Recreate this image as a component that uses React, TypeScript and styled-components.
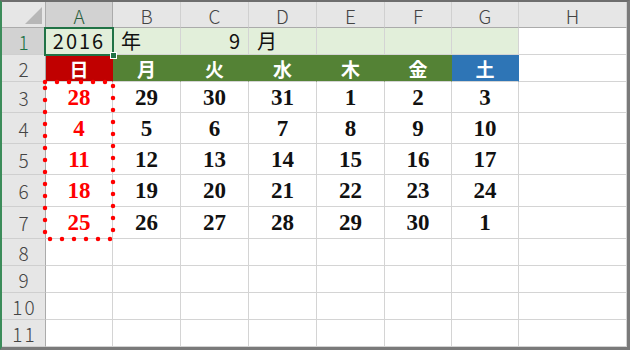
import React from 'react'
import styled, { createGlobalStyle, css } from 'styled-components'

const GlobalStyle = createGlobalStyle`
  html, body {
    margin: 0;
    padding: 0;
    background: #fff;
  }
  * {
    box-sizing: border-box;
  }
`

const gridLine = '#d4d4d4'
const jpFont = `"Noto Sans CJK JP", "Noto Sans", sans-serif`

// same tracks for the cells and for the layer drawn on top of them
const tracks = css`
  display: grid;
  grid-template-columns: 44px 67px 68px 68px 68px 68px 67px 67px 1fr;
  grid-template-rows: 26px 27px 27px 31px 31px 31px 32px 32px 27px 27px 27px 27px;
`

const Frame = styled.div`
  width: 630px;
  height: 350px;
  border-top: 2px solid #6e6e6e;
  border-left: 2px solid #3c8c5a;
  border-right: 3px solid #7a7a7a;
  border-bottom: 3px solid #7a7a7a;
  overflow: hidden;
  background: #fff;
  display: grid;
`

const Sheet = styled.div`
  ${tracks}
  grid-area: 1 / 1;
  font-family: ${jpFont};
`

const Overlay = styled.div`
  ${tracks}
  grid-area: 1 / 1;
  pointer-events: none;
`

const Corner = styled.div`
  background: #e6e6e6;
  border-right: 1px solid #ababab;
  border-bottom: 1px solid #ababab;
  display: flex;
  align-items: flex-end;
  justify-content: flex-end;
  padding: 0 3px 3px 0;

  &::after {
    content: '';
    width: 0;
    height: 0;
    border-left: 17px solid transparent;
    border-bottom: 17px solid #b7b7b7;
  }
`

const ColHead = styled.div<{ $active?: boolean }>`
  background: ${p => (p.$active ? '#d2d2d2' : '#e6e6e6')};
  color: ${p => (p.$active ? '#2a5e3c' : '#444')};
  border-right: 1px solid ${p => (p.$active ? '#ababab' : '#d0d0d0')};
  border-bottom: 1px solid #ababab;
  display: flex;
  align-items: center;
  justify-content: center;
  font-size: 19px;
  font-weight: 300;
  line-height: 1;
  padding-top: 1px;
`

const RowHead = styled.div<{ $active?: boolean }>`
  background: ${p => (p.$active ? '#d2d2d2' : '#e6e6e6')};
  color: ${p => (p.$active ? '#217346' : '#444')};
  border-right: 1px solid #ababab;
  border-bottom: 1px solid #cfcfcf;
  display: flex;
  align-items: center;
  justify-content: center;
  font-size: 19px;
  font-weight: 300;
  letter-spacing: 2px;
  line-height: 1;
  padding-left: 2px;
`

const Cell = styled.div<{ $fill?: string; $align?: 'left' | 'center' | 'right' }>`
  background: ${p => p.$fill || '#fff'};
  border-right: 1px solid ${p => (p.$fill && p.$fill !== '#e2efda' ? p.$fill : gridLine)};
  border-bottom: 1px solid ${gridLine};
  display: flex;
  align-items: center;
  justify-content: ${p => (p.$align === 'left' ? 'flex-start' : p.$align === 'right' ? 'flex-end' : 'center')};
  padding: 0 8px;
  white-space: nowrap;
  min-width: 0;
`

const TitleText = styled.span<{ $spaced?: boolean }>`
  font-family: ${jpFont};
  font-size: 20px;
  color: #111;
  letter-spacing: ${p => (p.$spaced ? '2px' : '0')};
  line-height: 1;
`

const DayName = styled.span`
  font-family: ${jpFont};
  font-weight: 700;
  font-size: 19px;
  color: #fff;
  line-height: 1;
`

const DateNum = styled.span<{ $sunday?: boolean }>`
  font-family: "Liberation Serif", "Times New Roman", serif;
  font-weight: 700;
  font-size: 23px;
  color: ${p => (p.$sunday ? '#ff0000' : '#111')};
  line-height: 1;
`

const Selection = styled.div`
  grid-column: 2 / 3;
  grid-row: 2 / 3;
  margin: -1px -1px -1px -2px;
  border: 2px solid #217346;
  position: relative;
`

const FillHandle = styled.div`
  position: absolute;
  right: -5px;
  bottom: -5px;
  width: 7px;
  height: 7px;
  background: #217346;
  border: 1px solid #fff;
`

const Marquee = styled.div`
  grid-column: 2 / 3;
  grid-row: 4 / 9;
  margin: -3px -3px -3px -4px;

  svg {
    display: block;
    width: 100%;
    height: 100%;
    overflow: visible;
  }
`

const columns = ['A', 'B', 'C', 'D', 'E', 'F', 'G', 'H']
const days = [
  { name: '日', fill: '#c00000' },
  { name: '月', fill: '#548235' },
  { name: '火', fill: '#548235' },
  { name: '水', fill: '#548235' },
  { name: '木', fill: '#548235' },
  { name: '金', fill: '#548235' },
  { name: '土', fill: '#2e75b6' },
]
const weeks = [
  [28, 29, 30, 31, 1, 2, 3],
  [4, 5, 6, 7, 8, 9, 10],
  [11, 12, 13, 14, 15, 16, 17],
  [18, 19, 20, 21, 22, 23, 24],
  [25, 26, 27, 28, 29, 30, 1],
]

const App = () => {
  return (
    <>
      <GlobalStyle />
      <Frame>
        <Sheet>
          <Corner />
          {columns.map(c => (
            <ColHead key={c} $active={c === 'A'}>{c}</ColHead>
          ))}

          <RowHead $active>1</RowHead>
          <Cell $fill="#e2efda"><TitleText $spaced>2016</TitleText></Cell>
          <Cell $fill="#e2efda" $align="left"><TitleText>年</TitleText></Cell>
          <Cell $fill="#e2efda" $align="right"><TitleText>9</TitleText></Cell>
          <Cell $fill="#e2efda" $align="left"><TitleText>月</TitleText></Cell>
          <Cell $fill="#e2efda" />
          <Cell $fill="#e2efda" />
          <Cell $fill="#e2efda" />
          <Cell />

          <RowHead>2</RowHead>
          {days.map(d => (
            <Cell key={d.name} $fill={d.fill}><DayName>{d.name}</DayName></Cell>
          ))}
          <Cell />

          {weeks.map((week, i) => (
            <React.Fragment key={i}>
              <RowHead>{i + 3}</RowHead>
              {week.map((n, j) => (
                <Cell key={j}><DateNum $sunday={j === 0}>{n}</DateNum></Cell>
              ))}
              <Cell />
            </React.Fragment>
          ))}

          {[8, 9, 10, 11].map(r => (
            <React.Fragment key={r}>
              <RowHead>{r}</RowHead>
              {columns.map(c => <Cell key={c} />)}
            </React.Fragment>
          ))}
        </Sheet>

        <Overlay>
          <Selection>
            <FillHandle />
          </Selection>
          <Marquee>
            <svg>
              <rect
                x="3"
                y="3"
                width="calc(100% - 6px)"
                height="calc(100% - 6px)"
                fill="none"
                stroke="#ff0000"
                strokeWidth="4.5"
                strokeLinecap="round"
                strokeDasharray="0 12"
              />
            </svg>
          </Marquee>
        </Overlay>
      </Frame>
    </>
  )
}

export default App
